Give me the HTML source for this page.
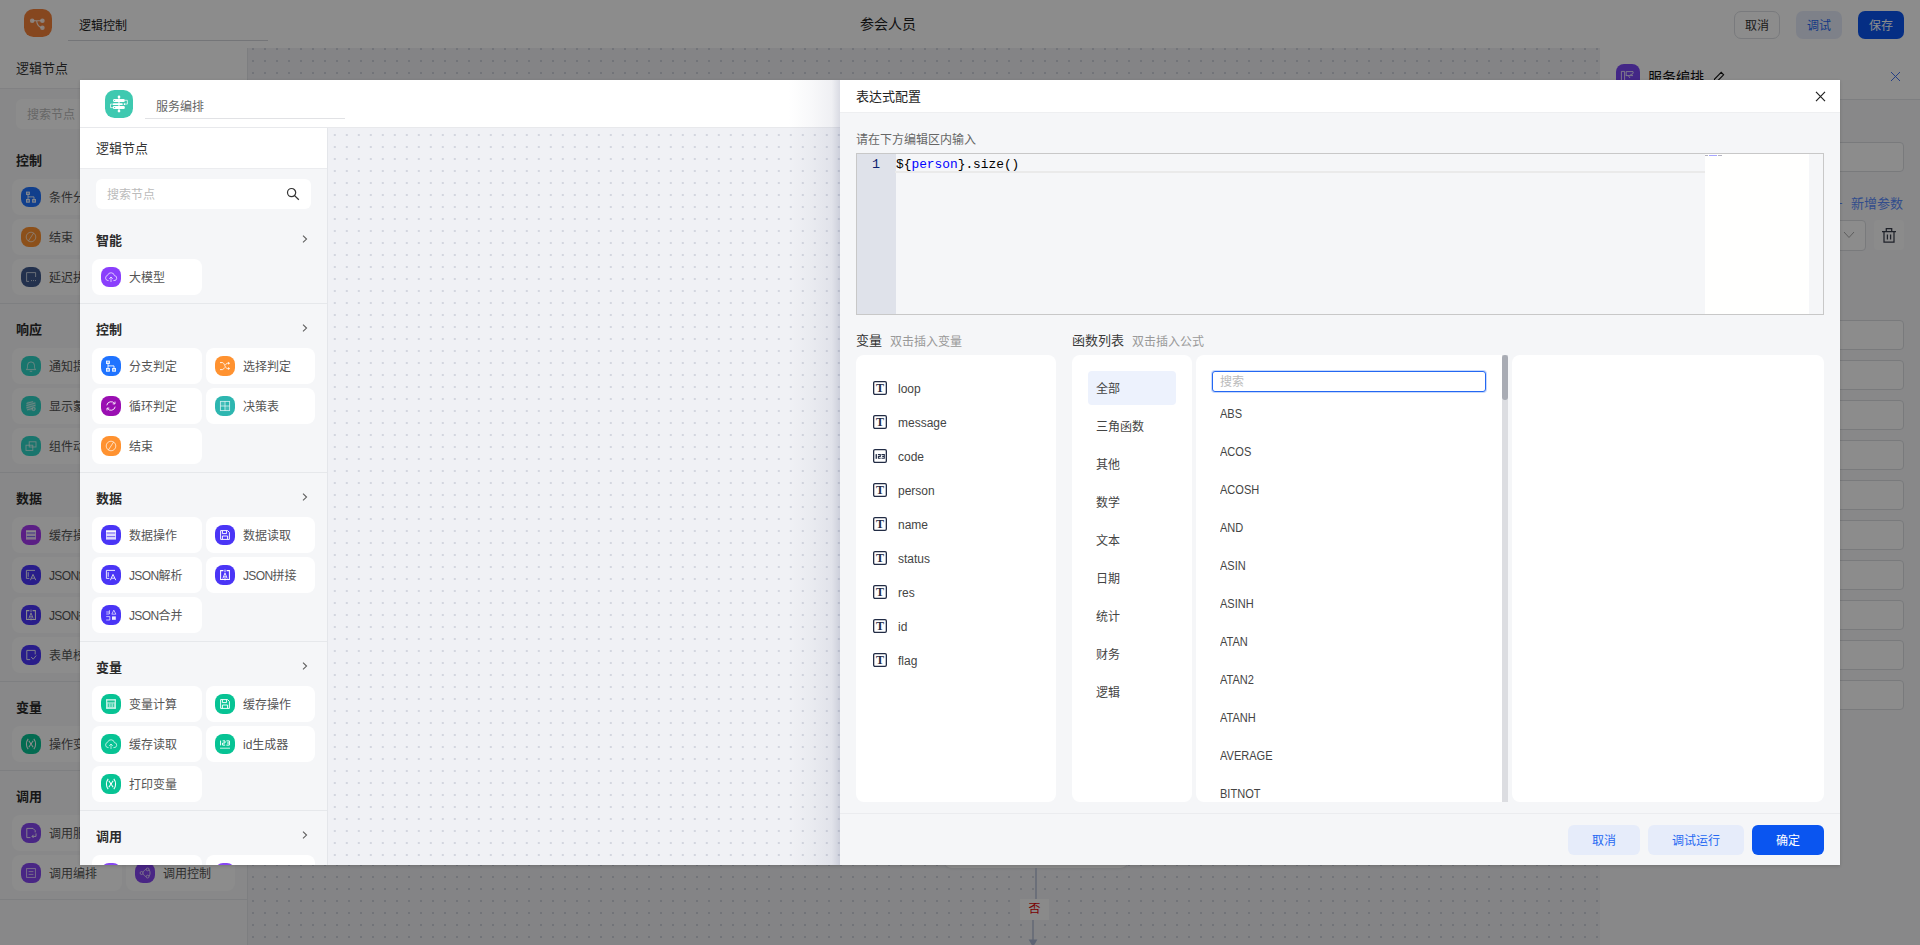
<!DOCTYPE html>
<html lang="zh-CN"><head><meta charset="utf-8"><title>参会人员</title>
<style>
*{box-sizing:border-box;margin:0;padding:0}
html,body{width:1920px;height:945px;overflow:hidden;background:#fff}
body{font-family:"Liberation Sans","Noto Sans CJK SC",sans-serif;font-size:12px;color:#333;position:relative}
#app{position:absolute;left:0;top:0;width:1920px;height:945px;overflow:hidden;background:#fff}
#app *, #m1 *{position:absolute}
#app span, #m1 span{position:static}
#app svg *, #m1 svg *{position:static}
#mask{position:absolute;left:0;top:0;width:1920px;height:945px;background:rgba(0,0,0,.45)}
#bghead{left:0;top:0;width:1920px;height:48px;background:#fff}
.logo{width:28px;height:28px;border-radius:9.5px}
.logo svg{left:0;top:0}
.ttl{white-space:nowrap;line-height:18px}
.uline{height:1px;background:#d4d6da}
.ctitle{left:860px;top:14px;width:56px;font-size:14px;line-height:20px;color:#222;white-space:nowrap}
.hbtn{top:11px;height:28px;border-radius:7px;font-size:12px;line-height:30px;text-align:center}
.hbtn[style*="border"]{line-height:28px}
#bgside{left:0;top:48px;width:248px;height:897px;background:#f7f8f9;border-right:1px solid #e4e6ea}
#bgsidehead{left:0;top:48px;width:247px;height:41px;background:#fff;border-bottom:1px solid #ebecef}
.shead{font-size:13px;line-height:18px;color:#333;white-space:nowrap;font-weight:400}
.search{height:30px;border-radius:6px;background:#fff}
.search span{position:absolute !important;left:11px;top:7px;line-height:18px;font-size:12px;color:#bbb;white-space:nowrap}
.sect{font-size:13px;font-weight:700;line-height:20px;color:#2b2b2b;white-space:nowrap}
.arr{}
.dv{height:1px;background:#e6e8eb}
.card{height:36px;border-radius:8px;background:#fff}
.card .ic{position:absolute !important;left:9px;top:8px;width:20px;height:20px;border-radius:8px}
.card .ic svg{left:0;top:0}
.card .lb{position:absolute !important;transform:translateY(0.5px);left:37px;top:9px;line-height:18px;font-size:12px;color:#555;white-space:nowrap}
.ic svg{left:0;top:0}
#bgcanvas{left:248px;top:48px;width:1352px;height:897px;background-color:#f0f1f5;background-image:radial-gradient(circle at 1px 1px,#d0d3dc 1px,transparent 1.35px);background-size:12px 12px;background-position:4px 0px}
.vline{width:2px;background:#c4cbdd}
.no{width:29px;height:21px;background:#fbfbfc;color:#e00000;font-size:12px;line-height:20px;text-align:center}
#bgright{left:1600px;top:48px;width:320px;height:897px;background:#f7f8fa}
#bgrighthead{left:1600px;top:48px;width:320px;height:52px;background:#fff;border-bottom:1px solid #e4e6ea}
.rin{left:1700px;width:204px;height:30px;border:1px solid #dcdee2;border-radius:4px;background:#fff}
#m1{position:absolute;left:80px;top:80px;width:1760px;height:785px;background:#fff;overflow:hidden;box-shadow:0 1px 3px rgba(0,0,0,.16)}
#m1head{left:0;top:0;width:1760px;height:48px;background:#fff;border-bottom:1px solid #e8e9ec}
#m1side{left:0;top:48px;width:248px;height:737px;background:#f5f6f8;border-right:1px solid #e4e6ea}
#m1sidehead{left:0;top:48px;width:247px;height:41px;background:#fff;border-bottom:1px solid #ebecef}
#m1canvas{left:248px;top:48px;width:1512px;height:737px;background-color:#f0f1f5;background-image:radial-gradient(circle at 1px 1px,#d3d6df 1px,transparent 1.35px);background-size:12px 12px;background-position:5.8px 6px}
#dshadow{left:708px;top:0;width:52px;height:785px;background:linear-gradient(90deg,rgba(30,40,90,0),rgba(30,40,90,.03) 45%,rgba(30,40,90,.07) 84%,rgba(30,40,90,.17))}
#drawer{left:760px;top:0;width:1000px;height:785px;background:#f5f6f8}
#dhead{left:0;top:0;width:1000px;height:33px;background:#fff;border-bottom:1px solid #eeeff1}
#dhead span{position:absolute !important;left:16px;top:7px;font-size:13px;line-height:20px;color:#222;white-space:nowrap;font-weight:400}
.t12{font-size:12px;line-height:18px;white-space:nowrap}
.t13{font-size:13px;line-height:18px;white-space:nowrap;color:#333}
#editor{left:16px;top:73px;width:968px;height:162px;border:1px solid #c8c8c8;background:#f5f6f8;overflow:hidden}
#editor .gut{left:0;top:0;width:39px;height:160px;background:#dfe2ea}
#editor .curline{left:38px;top:0;width:810px;height:19px;border-bottom:2px solid #eaeaea;border-top:0}
#editor .ln{left:0;top:1px;width:23px;text-align:right;font-family:"Liberation Mono","DejaVu Sans Mono",monospace;font-size:13.4px;line-height:19px;color:#0b216f}
#editor .code{left:39px;top:1px;font-family:"Liberation Mono","DejaVu Sans Mono",monospace;font-size:12.85px;line-height:19px;color:#000;white-space:pre}
#editor .mini{left:848px;top:0;width:104px;height:160px;background:#fffffe}
#editor .mini i{top:1px;height:1px;opacity:.75}
.wp{background:#fff;border-radius:8px}
.vi{width:14px;height:14px}
.vi svg{left:0;top:0}
.sinp{width:274px;height:21px;border:1px solid #2468f2;border-radius:3px;background:#fff;box-shadow:0 0 0 1px rgba(36,104,242,.25)}
.sinp span{position:absolute !important;left:7px;top:1px;line-height:19px;font-size:12px;color:#bbb}
#dfoot{left:0;top:733px;width:1000px;height:52px;border-top:1px solid #ebecef;background:#f5f6f8}
.fbtn{top:745px;height:30px;border-radius:6px;font-size:12px;line-height:32px;text-align:center}

.fn{transform:scaleX(.92);transform-origin:0 50%}
.lt{letter-spacing:-.65px}
.track{top:275px;width:6px;height:447px;background:#dcdde1}
.thumb{top:275px;width:6px;height:45px;border-radius:3px;background:#a9acb4}

.sect,.shead,#dhead span,.up{transform:translateY(-.5px)}
.dn{transform:translateY(.5px)}

</style></head><body>
<div id="app">
<div id="bghead"></div><div class="logo" style="left:24px;top:9px;background:#f5813a"><svg width="28" height="28" viewBox="0 0 28 28"><circle cx="8.2" cy="11.7" r="2.3" fill="#fff" fill-opacity=".85"/><circle cx="18.4" cy="11.7" r="2.3" fill="#fff" fill-opacity=".85"/><circle cx="18.4" cy="18.7" r="2.3" fill="#fff" fill-opacity=".85"/><path d="M8.2 11.7 H18.4 M12.6 11.9 C13 15.4 14.6 18.2 18.4 18.7" fill="none" stroke="#fff" stroke-opacity=".85" stroke-width="1.1"/></svg></div><div class="ttl dn" style="left:79px;top:16px;color:#222;font-size:12px">逻辑控制</div><div class="uline" style="left:68px;top:40px;width:200px"></div><div class="ctitle">参会人员</div><div class="hbtn" style="left:1734px;width:46px;border:1px solid #dcdee3;background:#fff;color:#333">取消</div><div class="hbtn" style="left:1796px;width:46px;background:#e6ecfa;color:#2468f2">调试</div><div class="hbtn" style="left:1858px;width:46px;background:#0a55f0;color:#fff">保存</div><div id="bgside"></div><div id="bgsidehead"></div><div class="shead" style="left:16px;top:60px">逻辑节点</div><div class="search" style="left:16px;top:99px;width:215px"><span>搜索节点</span></div><div class="sect" style="left:16px;top:151px">控制</div><div class="card" style="left:12px;top:179px;width:110px"><span class="ic" style="background:#1f73ff"><svg width="20" height="20" viewBox="0 0 20 20"><rect x="5.5" y="5.1" width="2.9" height="2.4" fill="#fff" fill-opacity=".45" stroke="#fff" stroke-width=".95" stroke-opacity=".92"/><rect x="5.5" y="12.5" width="2.9" height="2.7" fill="#fff" fill-opacity=".45" stroke="#fff" stroke-width=".95" stroke-opacity=".92"/><rect x="11.6" y="12.5" width="2.9" height="2.7" fill="#fff" fill-opacity=".45" stroke="#fff" stroke-width=".95" stroke-opacity=".92"/><path d="M7 7.5 V12.4 M7 9.9 H13 V12.4" fill="none" stroke="#fff" stroke-width="0.95" stroke-opacity="0.92"/></svg></span><span class="lb">条件分支</span></div><div class="card" style="left:126px;top:179px;width:109px"><span class="ic" style="background:#ff9230"><svg width="20" height="20" viewBox="0 0 20 20"><path d="M5 6.6 H7.4 C9.6 6.6 10 12.6 12.4 12.6 H13.6 M5 13.6 H7.4 C8.4 13.6 8.9 12.6 9.4 11.6 M10.5 9 C11 7.9 11.6 7.2 12.6 7.2 H13.6" fill="none" stroke="#fff" stroke-width="0.95" stroke-opacity="0.92"/><path d="M13.1 5.7 L15.1 7.2 L13.1 8.7 Z M13.1 11.1 L15.1 12.6 L13.1 14.1 Z" fill="#fff" fill-opacity=".92"/></svg></span><span class="lb">选择分支</span></div><div class="card" style="left:12px;top:219px;width:110px"><span class="ic" style="background:#ff9230"><svg width="20" height="20" viewBox="0 0 20 20"><circle cx="10" cy="10" r="4.8" fill="none" stroke="#fff" stroke-width="0.9" stroke-opacity="0.75"/><path d="M7.4 14 L12.6 6" fill="none" stroke="#fff" stroke-width="0.9" stroke-opacity="0.75"/></svg></span><span class="lb">结束</span></div><div class="card" style="left:126px;top:219px;width:109px"><span class="ic" style="background:#a63af2"><svg width="20" height="20" viewBox="0 0 20 20"><path d="M5.8 9.3 A4.3 4.3 0 0 1 13.6 7.6 M14.2 10.7 A4.3 4.3 0 0 1 6.4 12.4" fill="none" stroke="#fff" stroke-width="0.95" stroke-opacity="0.92"/><path d="M14 5.6 V7.9 H11.7 M6 14.4 V12.1 H8.3" fill="none" stroke="#fff" stroke-width="0.95" stroke-opacity="0.92"/></svg></span><span class="lb">循环</span></div><div class="card" style="left:12px;top:259px;width:110px"><span class="ic" style="background:#405a8c"><svg width="20" height="20" viewBox="0 0 20 20"><path d="M14.6 10 V5.6 H5.6 V14.4 H8" fill="none" stroke="#fff" stroke-width="0.9" stroke-opacity="0.75"/><path d="M10 13.6 H10.9 M12 13.6 H12.9 M14 13.6 H14.9" fill="none" stroke="#fff" stroke-width="1" stroke-opacity=".8"/></svg></span><span class="lb">延迟执行</span></div><div class="dv" style="left:0px;top:303px;width:247px"></div><div class="sect" style="left:16px;top:320px">响应</div><div class="card" style="left:12px;top:348px;width:110px"><span class="ic" style="background:#2fd6c6"><svg width="20" height="20" viewBox="0 0 20 20"><path d="M5.4 13.6 H14.6 C13.4 12.4 13.5 11.2 13.5 9.4 A3.5 3.5 0 0 0 6.5 9.4 C6.5 11.2 6.6 12.4 5.4 13.6 Z M8.8 15.3 H11.2" fill="none" stroke="#fff" stroke-width="0.9" stroke-opacity="0.75"/></svg></span><span class="lb">通知提示</span></div><div class="card" style="left:126px;top:348px;width:109px"><span class="ic" style="background:#2fd6c6"><svg width="20" height="20" viewBox="0 0 20 20"><path d="M5.4 13.6 H14.6 C13.4 12.4 13.5 11.2 13.5 9.4 A3.5 3.5 0 0 0 6.5 9.4 C6.5 11.2 6.6 12.4 5.4 13.6 Z M8.8 15.3 H11.2" fill="none" stroke="#fff" stroke-width="0.9" stroke-opacity="0.75"/></svg></span><span class="lb">消息确认</span></div><div class="card" style="left:12px;top:388px;width:110px"><span class="ic" style="background:#2fd6c6"><svg width="20" height="20" viewBox="0 0 20 20"><rect x="5.4" y="5.4" width="9.2" height="9.2" rx="2.2" fill="#fff" fill-opacity=".25"/><path d="M5.6 7.4 L12 5.6 M5.4 9.6 L14.4 7 M5.4 11.8 L14.6 9.2 M6 14 L12 12.2" fill="none" stroke="#fff" stroke-width=".8" stroke-opacity=".8"/><circle cx="12.6" cy="13" r="1.6" fill="none" stroke="#fff" stroke-width="0.9" stroke-opacity="0.75"/></svg></span><span class="lb">显示蒙层</span></div><div class="card" style="left:126px;top:388px;width:109px"><span class="ic" style="background:#2fd6c6"><svg width="20" height="20" viewBox="0 0 20 20"><rect x="5.4" y="5.4" width="9.2" height="9.2" rx="2.2" fill="#fff" fill-opacity=".25"/><path d="M5.6 7.4 L12 5.6 M5.4 9.6 L14.4 7 M5.4 11.8 L14.6 9.2 M6 14 L12 12.2" fill="none" stroke="#fff" stroke-width=".8" stroke-opacity=".8"/><circle cx="12.6" cy="13" r="1.6" fill="none" stroke="#fff" stroke-width="0.9" stroke-opacity="0.75"/></svg></span><span class="lb">隐藏蒙层</span></div><div class="card" style="left:12px;top:428px;width:110px"><span class="ic" style="background:#2fd6c6"><svg width="20" height="20" viewBox="0 0 20 20"><rect x="8.2" y="5.8" width="6.8" height="5.2" fill="none" stroke="#fff" stroke-width="0.9" stroke-opacity="0.75"/><rect x="5" y="9.2" width="6.8" height="5.2" fill="none" stroke="#fff" stroke-width="0.9" stroke-opacity="0.75"/></svg></span><span class="lb">组件动作</span></div><div class="dv" style="left:0px;top:472px;width:247px"></div><div class="sect" style="left:16px;top:489px">数据</div><div class="card" style="left:12px;top:517px;width:110px"><span class="ic" style="background:#a63af2"><svg width="20" height="20" viewBox="0 0 20 20"><rect x="5" y="5.4" width="10" height="9.2" fill="#fff" fill-opacity=".82"/><path d="M5.8 8 H14.2 M5.8 11.6 H14.2" stroke="#4b32f0" stroke-width=".9" stroke-opacity=".8"/><path d="M5 6.2 H15" stroke="#fff" stroke-width="1.4"/></svg></span><span class="lb">缓存操作</span></div><div class="card" style="left:126px;top:517px;width:109px"><span class="ic" style="background:#4b36fb"><svg width="20" height="20" viewBox="0 0 20 20"><path d="M5.6 5.6 H12.6 L14.4 7.4 V14.4 H5.6 Z M7.4 5.6 V8.6 H11.6 V5.6 M7.4 14.4 V11 H12.6 V14.4" fill="none" stroke="#fff" stroke-width=".95"/></svg></span><span class="lb">数据读取</span></div><div class="card" style="left:12px;top:557px;width:110px"><span class="ic" style="background:#4b36fb"><svg width="20" height="20" viewBox="0 0 20 20"><path d="M14 5.4 H5.4 V13.4 H8.4 M7.2 7.2 V11.8" fill="none" stroke="#fff" stroke-width="0.95" stroke-opacity="0.92"/><path d="M9.4 15.2 L12 9.4 L14.8 15.2 M10.4 13.2 H13.8" fill="none" stroke="#fff" stroke-width="0.95" stroke-opacity="0.92"/></svg></span><span class="lb"><span class=lt>JSON</span>解析</span></div><div class="card" style="left:126px;top:557px;width:109px"><span class="ic" style="background:#4b36fb"><svg width="20" height="20" viewBox="0 0 20 20"><path d="M8.4 5.6 H5.6 V14.4 H14.4 V5.6 H11.6" fill="none" stroke="#fff" stroke-width="1.05"/><path d="M7.8 13.6 L10 8 L12.2 13.6 M8.6 11.8 H11.4 M10 4.6 V7.4 M10 12.4 V15.4" fill="none" stroke="#fff" stroke-width="0.95" stroke-opacity="0.92"/></svg></span><span class="lb"><span class=lt>JSON</span>转换</span></div><div class="card" style="left:12px;top:597px;width:110px"><span class="ic" style="background:#4b36fb"><svg width="20" height="20" viewBox="0 0 20 20"><path d="M8.4 5.6 H5.6 V14.4 H14.4 V5.6 H11.6" fill="none" stroke="#fff" stroke-width="1.05"/><path d="M7.8 13.6 L10 8 L12.2 13.6 M8.6 11.8 H11.4 M10 4.6 V7.4 M10 12.4 V15.4" fill="none" stroke="#fff" stroke-width="0.95" stroke-opacity="0.92"/></svg></span><span class="lb"><span class=lt>JSON</span>拼接</span></div><div class="card" style="left:126px;top:597px;width:109px"><span class="ic" style="background:#4b36fb"><svg width="20" height="20" viewBox="0 0 20 20"><path d="M5.2 7 H8.4 M5.2 9 H8.4 V5.2 M5.2 11.6 H8.8 V15 H5.2" fill="none" stroke="#fff" stroke-width="0.9" stroke-opacity="0.75"/><path d="M10.8 9.2 L12.8 5.2 L14.9 9.2 Z" fill="none" stroke="#fff" stroke-width="0.9" stroke-opacity="0.75"/><rect x="11" y="11.4" width="3.8" height="3.4" fill="#fff" fill-opacity=".9"/></svg></span><span class="lb"><span class=lt>JSON</span>合并</span></div><div class="card" style="left:12px;top:637px;width:110px"><span class="ic" style="background:#4b36fb"><svg width="20" height="20" viewBox="0 0 20 20"><path d="M14.2 9.4 V5.4 H5.8 V14.6 H9.2" fill="none" stroke="#fff" stroke-width="0.95" stroke-opacity="0.92"/><path d="M10.2 12 L12.2 14.2 L15.2 10.6" fill="none" stroke="#fff" stroke-width="0.95" stroke-opacity="0.92"/></svg></span><span class="lb">表单校验</span></div><div class="dv" style="left:0px;top:681px;width:247px"></div><div class="sect" style="left:16px;top:698px">变量</div><div class="card" style="left:12px;top:726px;width:110px"><span class="ic" style="background:#07c394"><svg width="20" height="20" viewBox="0 0 20 20"><path d="M7.2 4.8 C4.8 7.8 4.8 12.2 7.2 15.2 M12.8 4.8 C15.2 7.8 15.2 12.2 12.8 15.2 M7.8 6.8 L12.2 13.2 M12.2 6.8 L7.8 13.2" fill="none" stroke="#fff" stroke-width="1.05"/></svg></span><span class="lb">操作变量</span></div><div class="card" style="left:126px;top:726px;width:109px"><span class="ic" style="background:#07c394"><svg width="20" height="20" viewBox="0 0 20 20"><path d="M7.2 4.8 C4.8 7.8 4.8 12.2 7.2 15.2 M12.8 4.8 C15.2 7.8 15.2 12.2 12.8 15.2 M7.8 6.8 L12.2 13.2 M12.2 6.8 L7.8 13.2" fill="none" stroke="#fff" stroke-width="1.05"/></svg></span><span class="lb">打印变量</span></div><div class="dv" style="left:0px;top:770px;width:247px"></div><div class="sect" style="left:16px;top:787px">调用</div><div class="card" style="left:12px;top:815px;width:110px"><span class="ic" style="background:#8646f2"><svg width="20" height="20" viewBox="0 0 20 20"><path d="M9.4 14.6 H5.8 V5.4 H12 L14.2 7.6 V9.4" fill="none" stroke="#fff" stroke-width="0.95" stroke-opacity="0.92"/><path d="M15 10.4 V13.4 H11 M12.6 11.8 L11 13.4 L12.6 15" fill="none" stroke="#fff" stroke-width="0.95" stroke-opacity="0.92"/></svg></span><span class="lb">调用服务</span></div><div class="card" style="left:126px;top:815px;width:109px"><span class="ic" style="background:#8646f2"><svg width="20" height="20" viewBox="0 0 20 20"><path d="M9.4 14.6 H5.8 V5.4 H12 L14.2 7.6 V9.4" fill="none" stroke="#fff" stroke-width="0.95" stroke-opacity="0.92"/><path d="M15 10.4 V13.4 H11 M12.6 11.8 L11 13.4 L12.6 15" fill="none" stroke="#fff" stroke-width="0.95" stroke-opacity="0.92"/></svg></span><span class="lb">调用接口</span></div><div class="card" style="left:12px;top:855px;width:110px"><span class="ic" style="background:#8646f2"><svg width="20" height="20" viewBox="0 0 20 20"><rect x="5.6" y="5.6" width="8.8" height="8.8" fill="none" stroke="#fff" stroke-width="0.9" stroke-opacity="0.75"/><path d="M7.6 8.6 H12.4 M7.6 11.4 H12.4" fill="none" stroke="#fff" stroke-width="0.9" stroke-opacity="0.75"/></svg></span><span class="lb">调用编排</span></div><div class="card" style="left:126px;top:855px;width:109px"><span class="ic" style="background:#8646f2"><svg width="20" height="20" viewBox="0 0 20 20"><circle cx="6.6" cy="10" r="1.5" fill="none" stroke="#fff" stroke-width="0.9" stroke-opacity="0.75"/><circle cx="12.6" cy="6.4" r="1.4" fill="none" stroke="#fff" stroke-width="0.9" stroke-opacity="0.75"/><circle cx="12.6" cy="13.6" r="1.4" fill="none" stroke="#fff" stroke-width="0.9" stroke-opacity="0.75"/><path d="M8 9.4 C9 7.6 10 6.6 11.2 6.4 M8 10.6 C9 12.4 10 13.4 11.2 13.6 M14 6.6 C15.4 8.4 15.4 11.6 14 13.4" fill="none" stroke="#fff" stroke-width="0.9" stroke-opacity="0.75"/></svg></span><span class="lb">调用控制</span></div><div class="dv" style="left:0px;top:899px;width:247px"></div><div id="bgcanvas"></div><div style="left:944px;top:790px;width:184px;height:78px;border-radius:8px;background:#fff;box-shadow:0 1px 3px rgba(0,0,0,.08)"></div><div class="vline" style="left:1035px;top:868px;height:32px"></div><div class="vline" style="left:1032px;top:918px;height:23px"></div><div class="no" style="left:1020px;top:899px">否</div><svg style="position:absolute;left:1028px;top:939px" width="10" height="8" viewBox="0 0 10 8"><path d="M0.6 0.6 L9.4 0.6 L5 8 Z" fill="#a9b7d3"/></svg><div id="bgright"></div><div id="bgrighthead"></div><div class="ic" style="position:absolute;left:1616px;top:64px;width:24px;height:24px;border-radius:8px;background:#7a48f5"><svg width="24" height="24" viewBox="0 0 24 24"><path d="M5.4 7.4 H8.6 V19 H5.4 Z M10.2 7.6 H17 M10.2 11.6 H17 M17 7.6 C17.6 9 17 10.6 14.4 10.4 M10.2 7.6 V12 M12.4 11.8 L14 14" fill="none" stroke="#fff" stroke-opacity=".8" stroke-width="1"/></svg></div><div class="ttl" style="left:1648px;top:68px;font-size:14px;color:#111">服务编排</div><svg style="position:absolute;left:1712px;top:70px" width="14" height="14" viewBox="0 0 14 14"><path d="M2 12 L2.6 9 L9.2 2.4 L11.6 4.8 L5 11.4 Z M2 12.5 H9" fill="none" stroke="#111" stroke-width="1.1"/></svg><svg style="position:absolute;left:1890px;top:71px" width="11" height="11" viewBox="0 0 11 11"><path d="M1 1 L10 10 M10 1 L1 10" fill="none" stroke="#3a6cf0" stroke-width="0.95"/></svg><div class="rin" style="top:142px"></div><div class="rin" style="top:320px"></div><div class="rin" style="top:360px"></div><div class="rin" style="top:400px"></div><div class="rin" style="top:440px"></div><div class="rin" style="top:480px"></div><div class="rin" style="top:520px"></div><div class="rin" style="top:560px"></div><div class="rin" style="top:600px"></div><div class="rin" style="top:640px"></div><div class="rin" style="top:680px"></div><div class="ttl" style="left:1835px;top:195px;font-size:13px;color:#5b8dff">+</div><div class="ttl" style="left:1851px;top:195px;font-size:13px;color:#5b8dff">新增参数</div><div class="rin" style="top:220px;left:1700px;width:166px;height:31px"></div><svg style="position:absolute;left:1843px;top:231px" width="12" height="8" viewBox="0 0 12 8"><path d="M1 1 L6 6.5 L11 1" fill="none" stroke="#aaa" stroke-width="1"/></svg><div style="position:absolute;left:1874px;top:220px;width:30px;height:30px;border-radius:4px;background:#fdfdfe"><svg width="30" height="30" viewBox="0 0 30 30"><path d="M8 11.7 H22 M12.3 11.5 V8.7 H17.7 V11.5 M10 11.7 V22 H20 V11.7 M13.4 14.4 V19.4 M16.6 14.4 V19.4" fill="none" stroke="#3a3f4c" stroke-width="1.25"/></svg></div>
</div>
<div id="mask"></div>
<div id="m1">
<div id="m1head"></div><div class="logo" style="left:25px;top:10px;background:#3ec9b0"><svg width="28" height="28" viewBox="0 0 28 28"><path d="M14 7 V21" stroke="#fff" stroke-width="1.1"/><circle cx="14" cy="6.9" r="1.35" fill="#fff"/><circle cx="14" cy="21.1" r="1.35" fill="#fff"/><rect x="8.1" y="9" width="11.7" height="3" rx="1.2" fill="#fff"/><rect x="7.9" y="13.3" width="9.8" height="1.7" rx=".6" fill="#fff"/><rect x="18.8" y="13.3" width="1.4" height="1.7" fill="#fff"/><rect x="7.9" y="16.1" width="11.9" height="2.9" rx="1.2" fill="#fff"/><path d="M19.8 10.3 H22.4 V14.1 H20.2 M7.9 14.1 H5.5 V17.6 H7.9" fill="none" stroke="#fff" stroke-width=".8" stroke-opacity=".9"/><path d="M9 9.9 L10.6 10.5 L9 11.1 Z M9 17 L10.6 17.6 L9 18.2 Z" fill="#3ec9b0"/></svg></div><div class="ttl dn" style="left:76px;top:17px;color:#666;font-size:12px">服务编排</div><div class="uline" style="left:65px;top:38px;width:200px;background:#e1e2e5"></div><div id="m1side"></div><div id="m1sidehead"></div><div class="shead" style="left:16px;top:60px;color:#333">逻辑节点</div><div class="search" style="left:16px;top:99px;width:215px"><span>搜索节点</span><svg style="position:absolute;left:190px;top:8px" width="14" height="14" viewBox="0 0 14 14"><circle cx="5.6" cy="5.6" r="4.1" fill="none" stroke="#333" stroke-width="1.2"/><path d="M8.6 8.6 L12.8 12.8" stroke="#333" stroke-width="1.3"/></svg></div><div class="sect" style="left:16px;top:151px">智能</div><svg class="arr" style="left:222px;top:154px" width="8" height="11" viewBox="0 0 8 11"><path d="M1 1.7 L4.5 5.05 L1 8.4" fill="none" stroke="#606060" stroke-width="1.15"/></svg><div class="card" style="left:12px;top:179px;width:110px"><span class="ic" style="background:#8a3ffc"><svg width="20" height="20" viewBox="0 0 20 20"><path d="M7.6 13.6 H7 A2.7 2.7 0 0 1 6.6 8.3 A3.5 3.5 0 0 1 13.4 8.6 A2.5 2.5 0 0 1 13 13.6 H12.4" fill="none" stroke="#fff" stroke-width="0.9" stroke-opacity="0.75"/><path d="M10 15 V10 M8.2 11.8 L10 10 L11.8 11.8" fill="none" stroke="#fff" stroke-width="0.9" stroke-opacity="0.75"/></svg></span><span class="lb">大模型</span></div><div class="dv" style="left:0px;top:223px;width:247px"></div><div class="sect" style="left:16px;top:240px">控制</div><svg class="arr" style="left:222px;top:243px" width="8" height="11" viewBox="0 0 8 11"><path d="M1 1.7 L4.5 5.05 L1 8.4" fill="none" stroke="#606060" stroke-width="1.15"/></svg><div class="card" style="left:12px;top:268px;width:110px"><span class="ic" style="background:#1f73ff"><svg width="20" height="20" viewBox="0 0 20 20"><rect x="5.5" y="5.1" width="2.9" height="2.4" fill="#fff" fill-opacity=".45" stroke="#fff" stroke-width=".95" stroke-opacity=".92"/><rect x="5.5" y="12.5" width="2.9" height="2.7" fill="#fff" fill-opacity=".45" stroke="#fff" stroke-width=".95" stroke-opacity=".92"/><rect x="11.6" y="12.5" width="2.9" height="2.7" fill="#fff" fill-opacity=".45" stroke="#fff" stroke-width=".95" stroke-opacity=".92"/><path d="M7 7.5 V12.4 M7 9.9 H13 V12.4" fill="none" stroke="#fff" stroke-width="0.95" stroke-opacity="0.92"/></svg></span><span class="lb">分支判定</span></div><div class="card" style="left:126px;top:268px;width:109px"><span class="ic" style="background:#ff9230"><svg width="20" height="20" viewBox="0 0 20 20"><path d="M5 6.6 H7.4 C9.6 6.6 10 12.6 12.4 12.6 H13.6 M5 13.6 H7.4 C8.4 13.6 8.9 12.6 9.4 11.6 M10.5 9 C11 7.9 11.6 7.2 12.6 7.2 H13.6" fill="none" stroke="#fff" stroke-width="0.95" stroke-opacity="0.92"/><path d="M13.1 5.7 L15.1 7.2 L13.1 8.7 Z M13.1 11.1 L15.1 12.6 L13.1 14.1 Z" fill="#fff" fill-opacity=".92"/></svg></span><span class="lb">选择判定</span></div><div class="card" style="left:12px;top:308px;width:110px"><span class="ic" style="background:#9a0fb2"><svg width="20" height="20" viewBox="0 0 20 20"><path d="M5.8 9.3 A4.3 4.3 0 0 1 13.6 7.6 M14.2 10.7 A4.3 4.3 0 0 1 6.4 12.4" fill="none" stroke="#fff" stroke-width="0.95" stroke-opacity="0.92"/><path d="M14 5.6 V7.9 H11.7 M6 14.4 V12.1 H8.3" fill="none" stroke="#fff" stroke-width="0.95" stroke-opacity="0.92"/></svg></span><span class="lb">循环判定</span></div><div class="card" style="left:126px;top:308px;width:109px"><span class="ic" style="background:#2db6b0"><svg width="20" height="20" viewBox="0 0 20 20"><rect x="5.4" y="5.4" width="9.2" height="9.2" fill="none" stroke="#fff" stroke-width="0.9" stroke-opacity="0.75"/><path d="M10 5.4 V14.6 M5.4 10 H14.6" fill="none" stroke="#fff" stroke-width="0.9" stroke-opacity="0.75"/><rect x="6" y="6" width="3.4" height="3.4" fill="#fff" fill-opacity=".12"/><rect x="10.6" y="10.6" width="3.4" height="3.4" fill="#fff" fill-opacity=".12"/></svg></span><span class="lb">决策表</span></div><div class="card" style="left:12px;top:348px;width:110px"><span class="ic" style="background:#ff9230"><svg width="20" height="20" viewBox="0 0 20 20"><circle cx="10" cy="10" r="4.8" fill="none" stroke="#fff" stroke-width="0.9" stroke-opacity="0.75"/><path d="M7.4 14 L12.6 6" fill="none" stroke="#fff" stroke-width="0.9" stroke-opacity="0.75"/></svg></span><span class="lb">结束</span></div><div class="dv" style="left:0px;top:392px;width:247px"></div><div class="sect" style="left:16px;top:409px">数据</div><svg class="arr" style="left:222px;top:412px" width="8" height="11" viewBox="0 0 8 11"><path d="M1 1.7 L4.5 5.05 L1 8.4" fill="none" stroke="#606060" stroke-width="1.15"/></svg><div class="card" style="left:12px;top:437px;width:110px"><span class="ic" style="background:#4a35f6"><svg width="20" height="20" viewBox="0 0 20 20"><rect x="5" y="5.4" width="10" height="9.2" fill="#fff" fill-opacity=".82"/><path d="M5.8 8 H14.2 M5.8 11.6 H14.2" stroke="#4b32f0" stroke-width=".9" stroke-opacity=".8"/><path d="M5 6.2 H15" stroke="#fff" stroke-width="1.4"/></svg></span><span class="lb">数据操作</span></div><div class="card" style="left:126px;top:437px;width:109px"><span class="ic" style="background:#4a35f6"><svg width="20" height="20" viewBox="0 0 20 20"><path d="M5.6 5.6 H12.6 L14.4 7.4 V14.4 H5.6 Z M7.4 5.6 V8.6 H11.6 V5.6 M7.4 14.4 V11 H12.6 V14.4" fill="none" stroke="#fff" stroke-width=".95"/></svg></span><span class="lb">数据读取</span></div><div class="card" style="left:12px;top:477px;width:110px"><span class="ic" style="background:#4a35f6"><svg width="20" height="20" viewBox="0 0 20 20"><path d="M14 5.4 H5.4 V13.4 H8.4 M7.2 7.2 V11.8" fill="none" stroke="#fff" stroke-width="0.95" stroke-opacity="0.92"/><path d="M9.4 15.2 L12 9.4 L14.8 15.2 M10.4 13.2 H13.8" fill="none" stroke="#fff" stroke-width="0.95" stroke-opacity="0.92"/></svg></span><span class="lb"><span class=lt>JSON</span>解析</span></div><div class="card" style="left:126px;top:477px;width:109px"><span class="ic" style="background:#4a35f6"><svg width="20" height="20" viewBox="0 0 20 20"><path d="M8.4 5.6 H5.6 V14.4 H14.4 V5.6 H11.6" fill="none" stroke="#fff" stroke-width="1.05"/><path d="M7.8 13.6 L10 8 L12.2 13.6 M8.6 11.8 H11.4 M10 4.6 V7.4 M10 12.4 V15.4" fill="none" stroke="#fff" stroke-width="0.95" stroke-opacity="0.92"/></svg></span><span class="lb"><span class=lt>JSON</span>拼接</span></div><div class="card" style="left:12px;top:517px;width:110px"><span class="ic" style="background:#4a35f6"><svg width="20" height="20" viewBox="0 0 20 20"><path d="M5.2 7 H8.4 M5.2 9 H8.4 V5.2 M5.2 11.6 H8.8 V15 H5.2" fill="none" stroke="#fff" stroke-width="0.9" stroke-opacity="0.75"/><path d="M10.8 9.2 L12.8 5.2 L14.9 9.2 Z" fill="none" stroke="#fff" stroke-width="0.9" stroke-opacity="0.75"/><rect x="11" y="11.4" width="3.8" height="3.4" fill="#fff" fill-opacity=".9"/></svg></span><span class="lb"><span class=lt>JSON</span>合并</span></div><div class="dv" style="left:0px;top:561px;width:247px"></div><div class="sect" style="left:16px;top:578px">变量</div><svg class="arr" style="left:222px;top:581px" width="8" height="11" viewBox="0 0 8 11"><path d="M1 1.7 L4.5 5.05 L1 8.4" fill="none" stroke="#606060" stroke-width="1.15"/></svg><div class="card" style="left:12px;top:606px;width:110px"><span class="ic" style="background:#07c394"><svg width="20" height="20" viewBox="0 0 20 20"><rect x="5.3" y="5.4" width="9.4" height="9.2" fill="#fff" fill-opacity=".55"/><path d="M5.3 5.9 H14.7 M5.3 14.2 H14.7 M5.8 5.4 V14.6 M14.2 5.4 V14.6" stroke="#fff" stroke-width=".9" stroke-opacity=".9"/><rect x="6.3" y="6.6" width="7.4" height="1.6" fill="#12bf8e" fill-opacity=".9"/><path d="M7.4 9.6 V13 M10 9.6 V13 M12.6 9.6 V13" stroke="#12bf8e" stroke-width=".9" stroke-opacity=".8"/></svg></span><span class="lb">变量计算</span></div><div class="card" style="left:126px;top:606px;width:109px"><span class="ic" style="background:#07c394"><svg width="20" height="20" viewBox="0 0 20 20"><path d="M5.6 5.6 H12.6 L14.4 7.4 V14.4 H5.6 Z M7.4 5.6 V8.6 H11.6 V5.6 M7.4 14.4 V11 H12.6 V14.4" fill="none" stroke="#fff" stroke-width=".95"/></svg></span><span class="lb">缓存操作</span></div><div class="card" style="left:12px;top:646px;width:110px"><span class="ic" style="background:#07c394"><svg width="20" height="20" viewBox="0 0 20 20"><path d="M7.6 13.6 H7 A2.7 2.7 0 0 1 6.6 8.3 A3.5 3.5 0 0 1 13.4 8.6 A2.5 2.5 0 0 1 13 13.6 H12.4" fill="none" stroke="#fff" stroke-width="0.9" stroke-opacity="0.75"/><path d="M10 15 V10 M8.2 11.8 L10 10 L11.8 11.8" fill="none" stroke="#fff" stroke-width="0.9" stroke-opacity="0.75"/></svg></span><span class="lb">缓存读取</span></div><div class="card" style="left:126px;top:646px;width:109px"><span class="ic" style="background:#07c394"><svg width="20" height="20" viewBox="0 0 20 20"><path d="M5 14.2 H15" fill="none" stroke="#fff" stroke-width="1" stroke-opacity=".8"/><path d="M5.6 6.6 V11.4 M7.6 6.9 H10 V9 H7.6 V11.1 H10.2 M11.4 6.9 H14.4 V11.1 H11.4 M12 9 H14.4" fill="none" stroke="#fff" stroke-width="1"/></svg></span><span class="lb">id生成器</span></div><div class="card" style="left:12px;top:686px;width:110px"><span class="ic" style="background:#07c394"><svg width="20" height="20" viewBox="0 0 20 20"><path d="M7.2 4.8 C4.8 7.8 4.8 12.2 7.2 15.2 M12.8 4.8 C15.2 7.8 15.2 12.2 12.8 15.2 M7.8 6.8 L12.2 13.2 M12.2 6.8 L7.8 13.2" fill="none" stroke="#fff" stroke-width="1.05"/></svg></span><span class="lb">打印变量</span></div><div class="dv" style="left:0px;top:730px;width:247px"></div><div class="sect" style="left:16px;top:747px">调用</div><svg class="arr" style="left:222px;top:750px" width="8" height="11" viewBox="0 0 8 11"><path d="M1 1.7 L4.5 5.05 L1 8.4" fill="none" stroke="#606060" stroke-width="1.15"/></svg><div class="card" style="left:12px;top:775px;width:110px"><span class="ic" style="background:#8646f2"><svg width="20" height="20" viewBox="0 0 20 20"><path d="M9.4 14.6 H5.8 V5.4 H12 L14.2 7.6 V9.4" fill="none" stroke="#fff" stroke-width="0.95" stroke-opacity="0.92"/><path d="M15 10.4 V13.4 H11 M12.6 11.8 L11 13.4 L12.6 15" fill="none" stroke="#fff" stroke-width="0.95" stroke-opacity="0.92"/></svg></span><span class="lb">调用服务</span></div><div class="card" style="left:126px;top:775px;width:109px"><span class="ic" style="background:#8646f2"><svg width="20" height="20" viewBox="0 0 20 20"><rect x="5.6" y="5.6" width="8.8" height="8.8" fill="none" stroke="#fff" stroke-width="0.9" stroke-opacity="0.75"/><path d="M7.6 8.6 H12.4 M7.6 11.4 H12.4" fill="none" stroke="#fff" stroke-width="0.9" stroke-opacity="0.75"/></svg></span><span class="lb">调用编排</span></div><div id="m1canvas"></div>
<div id="dshadow"></div>
<div id="drawer">
<div id="dhead"><span>表达式配置</span><svg style="position:absolute;left:975px;top:11px" width="11" height="11" viewBox="0 0 11 11"><path d="M1 0.8 L10 10.2 M10 0.8 L1 10.2" fill="none" stroke="#222" stroke-width="1.2"/></svg></div><div class="t12 up" style="left:16px;top:51px;color:#666">请在下方编辑区内输入</div><div id="editor"><div class="gut"></div><div class="curline"></div><div class="ln">1</div><div class="code">${<span style="color:#0000ff">person</span>}.size()</div><div class="mini"><i style="left:0;width:3px;background:#99a"></i><i style="left:4px;width:8px;background:#88f"></i><i style="left:13px;width:4px;background:#99a"></i></div></div><div class="t13" style="left:16px;top:252px">变量</div><div class="t12" style="left:50px;top:253px;color:#999">双击插入变量</div><div class="wp" style="left:16px;top:275px;width:200px;height:447px"></div><div class="vi" style="left:33px;top:301px"><svg width="14" height="14" viewBox="0 0 14 14"><rect x="0.65" y="0.65" width="12.7" height="12.7" rx="1.3" fill="#fff" stroke="#222c45" stroke-width="1.3"/><text x="7" y="11" text-anchor="middle" font-family="Liberation Serif,serif" font-weight="700" font-size="12" fill="#222c45">T</text></svg></div><div class="t12" style="left:58px;top:300px;color:#444">loop</div><div class="vi" style="left:33px;top:335px"><svg width="14" height="14" viewBox="0 0 14 14"><rect x="0.65" y="0.65" width="12.7" height="12.7" rx="1.3" fill="#fff" stroke="#222c45" stroke-width="1.3"/><text x="7" y="11" text-anchor="middle" font-family="Liberation Serif,serif" font-weight="700" font-size="12" fill="#222c45">T</text></svg></div><div class="t12" style="left:58px;top:334px;color:#444">message</div><div class="vi" style="left:33px;top:369px"><svg width="14" height="14" viewBox="0 0 14 14"><rect x="0.65" y="0.65" width="12.7" height="12.7" rx="1.3" fill="#fff" stroke="#222c45" stroke-width="1.3"/><rect x="2.6" y="5.1" width="1.3" height="4.7" fill="#222c45"/><path d="M4.9 5.6 H7.3 V7.45 H5.4 V9.3 H7.7 M8.5 5.6 H11.3 V9.3 H8.5 M9.2 7.45 H11.3" fill="none" stroke="#222c45" stroke-width="1.05"/></svg></div><div class="t12" style="left:58px;top:368px;color:#444">code</div><div class="vi" style="left:33px;top:403px"><svg width="14" height="14" viewBox="0 0 14 14"><rect x="0.65" y="0.65" width="12.7" height="12.7" rx="1.3" fill="#fff" stroke="#222c45" stroke-width="1.3"/><text x="7" y="11" text-anchor="middle" font-family="Liberation Serif,serif" font-weight="700" font-size="12" fill="#222c45">T</text></svg></div><div class="t12" style="left:58px;top:402px;color:#444">person</div><div class="vi" style="left:33px;top:437px"><svg width="14" height="14" viewBox="0 0 14 14"><rect x="0.65" y="0.65" width="12.7" height="12.7" rx="1.3" fill="#fff" stroke="#222c45" stroke-width="1.3"/><text x="7" y="11" text-anchor="middle" font-family="Liberation Serif,serif" font-weight="700" font-size="12" fill="#222c45">T</text></svg></div><div class="t12" style="left:58px;top:436px;color:#444">name</div><div class="vi" style="left:33px;top:471px"><svg width="14" height="14" viewBox="0 0 14 14"><rect x="0.65" y="0.65" width="12.7" height="12.7" rx="1.3" fill="#fff" stroke="#222c45" stroke-width="1.3"/><text x="7" y="11" text-anchor="middle" font-family="Liberation Serif,serif" font-weight="700" font-size="12" fill="#222c45">T</text></svg></div><div class="t12" style="left:58px;top:470px;color:#444">status</div><div class="vi" style="left:33px;top:505px"><svg width="14" height="14" viewBox="0 0 14 14"><rect x="0.65" y="0.65" width="12.7" height="12.7" rx="1.3" fill="#fff" stroke="#222c45" stroke-width="1.3"/><text x="7" y="11" text-anchor="middle" font-family="Liberation Serif,serif" font-weight="700" font-size="12" fill="#222c45">T</text></svg></div><div class="t12" style="left:58px;top:504px;color:#444">res</div><div class="vi" style="left:33px;top:539px"><svg width="14" height="14" viewBox="0 0 14 14"><rect x="0.65" y="0.65" width="12.7" height="12.7" rx="1.3" fill="#fff" stroke="#222c45" stroke-width="1.3"/><text x="7" y="11" text-anchor="middle" font-family="Liberation Serif,serif" font-weight="700" font-size="12" fill="#222c45">T</text></svg></div><div class="t12" style="left:58px;top:538px;color:#444">id</div><div class="vi" style="left:33px;top:573px"><svg width="14" height="14" viewBox="0 0 14 14"><rect x="0.65" y="0.65" width="12.7" height="12.7" rx="1.3" fill="#fff" stroke="#222c45" stroke-width="1.3"/><text x="7" y="11" text-anchor="middle" font-family="Liberation Serif,serif" font-weight="700" font-size="12" fill="#222c45">T</text></svg></div><div class="t12" style="left:58px;top:572px;color:#444">flag</div><div class="t13" style="left:232px;top:252px;color:#3a3a3a">函数列表</div><div class="t12" style="left:292px;top:253px;color:#999">双击插入公式</div><div class="wp" style="left:232px;top:275px;width:120px;height:447px"></div><div style="position:absolute;left:248px;top:291px;width:88px;height:34px;border-radius:4px;background:#edf2fd"></div><div class="t12" style="left:256px;top:300px;color:#444">全部</div><div class="t12" style="left:256px;top:338px;color:#444">三角函数</div><div class="t12" style="left:256px;top:376px;color:#444">其他</div><div class="t12" style="left:256px;top:414px;color:#444">数学</div><div class="t12" style="left:256px;top:452px;color:#444">文本</div><div class="t12" style="left:256px;top:490px;color:#444">日期</div><div class="t12" style="left:256px;top:528px;color:#444">统计</div><div class="t12" style="left:256px;top:566px;color:#444">财务</div><div class="t12" style="left:256px;top:604px;color:#444">逻辑</div><div class="wp" style="left:356px;top:275px;width:310px;height:447px;border-radius:8px 0 0 8px"></div><div class="track" style="left:662px"></div><div class="thumb" style="left:662px"></div><div class="sinp" style="left:372px;top:291px"><span>搜索</span></div><div class="t12 fn" style="left:380px;top:325px;color:#444">ABS</div><div class="t12 fn" style="left:380px;top:363px;color:#444">ACOS</div><div class="t12 fn" style="left:380px;top:401px;color:#444">ACOSH</div><div class="t12 fn" style="left:380px;top:439px;color:#444">AND</div><div class="t12 fn" style="left:380px;top:477px;color:#444">ASIN</div><div class="t12 fn" style="left:380px;top:515px;color:#444">ASINH</div><div class="t12 fn" style="left:380px;top:553px;color:#444">ATAN</div><div class="t12 fn" style="left:380px;top:591px;color:#444">ATAN2</div><div class="t12 fn" style="left:380px;top:629px;color:#444">ATANH</div><div class="t12 fn" style="left:380px;top:667px;color:#444">AVERAGE</div><div class="t12 fn" style="left:380px;top:705px;color:#444">BITNOT</div><div class="wp" style="left:672px;top:275px;width:312px;height:447px"></div><div id="dfoot"></div><div class="fbtn" style="left:728px;width:72px;background:#e6ecfa;color:#2468f2">取消</div><div class="fbtn" style="left:808px;width:96px;background:#e6ecfa;color:#2468f2">调试运行</div><div class="fbtn" style="left:912px;width:72px;background:#0a55f0;color:#fff">确定</div>
</div>
</div>
</body></html>
